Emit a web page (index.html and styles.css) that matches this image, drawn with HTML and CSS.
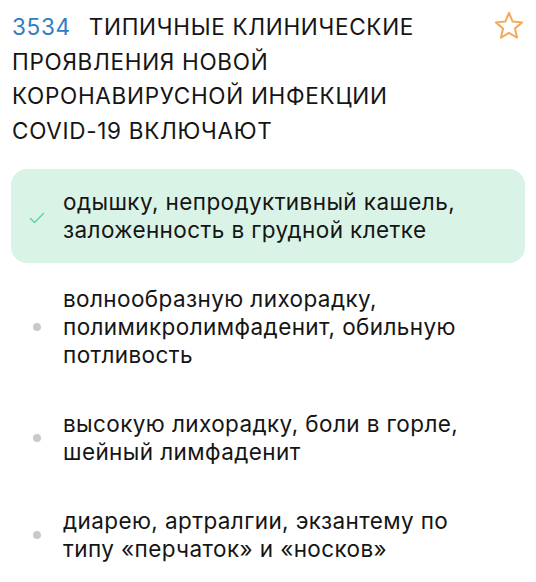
FILE: index.html
```html
<!DOCTYPE html>
<html lang="ru">
<head>
    <meta charset="UTF-8">
    <meta name="viewport" content="width=device-width, initial-scale=1.0">
    <link rel="stylesheet" href="styles.css">
    <title>Вопрос 3534</title>
</head>
<body>
    <div class="question">
        <div class="q-head">
            <h1 class="q-title"><span class="q-num">3534</span><span class="q-text">ТИПИЧНЫЕ КЛИНИЧЕСКИЕ ПРОЯВЛЕНИЯ НОВОЙ КОРОНАВИРУСНОЙ ИНФЕКЦИИ COVID-19 ВКЛЮЧАЮТ</span></h1>
            <svg class="star" viewBox="0 0 24 24" width="30" height="30">
                <path d="M12 1.5L14.94 8.45L22.46 9.1L16.76 14.05L18.47 21.4L12 17.5L5.53 21.4L7.24 14.05L1.54 9.1L9.06 8.45Z"
                      fill="none" stroke="#f5a858" stroke-width="1.6" stroke-linejoin="round"/>
            </svg>
        </div>

        <ul class="answers">
            <li class="answer correct">
                <span class="mark">
                    <svg viewBox="0 0 16 12" width="16" height="12">
                        <path d="M1.5 6.5l4 4 9-9" fill="none" stroke="#5ccf9c" stroke-width="1.4" stroke-linecap="round" stroke-linejoin="round"/>
                    </svg>
                </span>
                <span class="answer-text">одышку, непродуктивный кашель, заложенность в грудной клетке</span>
            </li>
            <li class="answer">
                <span class="mark"><span class="dot"></span></span>
                <span class="answer-text">волнообразную лихорадку, полимикролимфаденит, обильную потливость</span>
            </li>
            <li class="answer">
                <span class="mark"><span class="dot"></span></span>
                <span class="answer-text">высокую лихорадку, боли в горле, шейный лимфаденит</span>
            </li>
            <li class="answer">
                <span class="mark"><span class="dot"></span></span>
                <span class="answer-text">диарею, артралгии, экзантему по типу «перчаток» и «носков»</span>
            </li>
        </ul>
    </div>
</body>
</html>
```

FILE: styles.css
```css
* {
    margin: 0;
    padding: 0;
    box-sizing: border-box;
}

body {
    background-color: #fff;
    font-family: Inter, "Noto Sans", sans-serif;
    color: #151515;
}

.question {
    padding: 10px 11px;
}

.q-head {
    display: flex;
    align-items: flex-start;
    padding-left: 1px;
}

.q-title {
    font-size: 22.5px;
    font-weight: 400;
    line-height: 34.5px;
    letter-spacing: 0.7px;
    max-width: 455px;
}

.q-num {
    color: #2f7cc2;
    margin-right: 18px;
}

.star {
    margin: 1px 1px 0 auto;
    flex-shrink: 0;
}

.answers {
    list-style: none;
    margin-top: 21px;
}

.answer {
    display: flex;
    align-items: center;
    padding: 19px 35px 19px 0;
    margin-bottom: 3px;
    font-size: 22.5px;
    line-height: 28px;
    letter-spacing: 0.4px;
}

.answer.correct {
    background-color: #d9f3e6;
    border-radius: 16px;
}

.mark {
    width: 52px;
    flex-shrink: 0;
    display: flex;
    justify-content: center;
    align-items: center;
}

.correct .mark {
    padding-top: 4px;
}

.dot {
    width: 8px;
    height: 8px;
    border-radius: 50%;
    background-color: #c9c9c9;
}
```
